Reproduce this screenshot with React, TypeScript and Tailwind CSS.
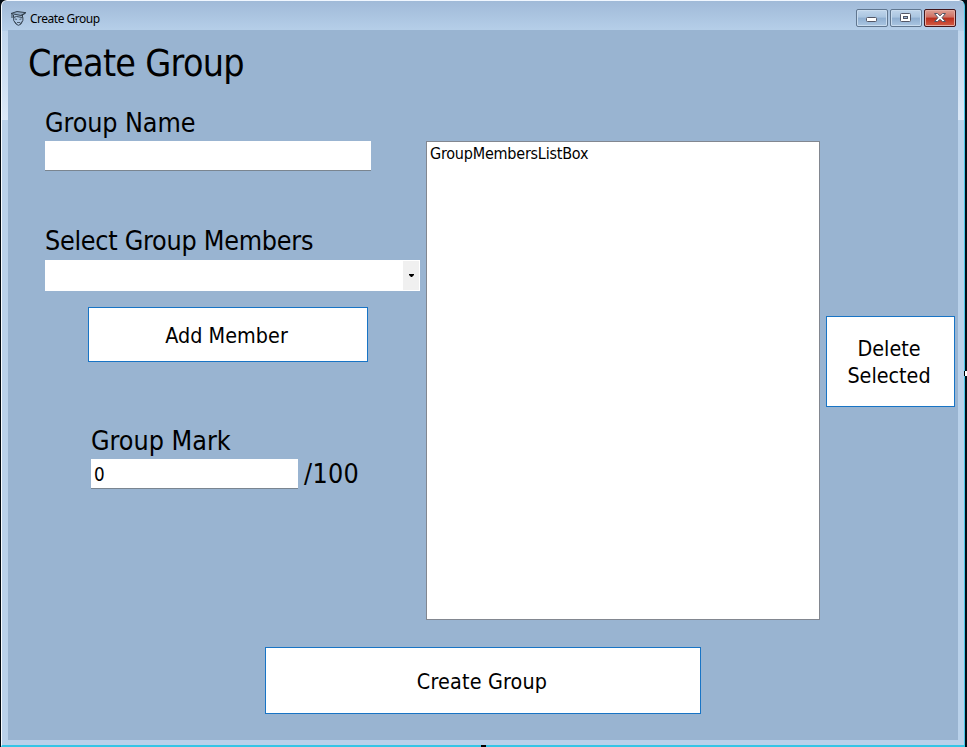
import type { ReactNode } from "react";

function WindowButton({ close = false, children }: { close?: boolean; children: ReactNode }) {
  const tone = close
    ? "border-[#42161b] bg-[linear-gradient(#dda094_0%,#cf6f62_45%,#b92d1c_50%,#d45c43_100%)] shadow-[inset_0_0_0_1px_#e5aaa0]"
    : "border-[#60768f] bg-[linear-gradient(#c0d5eb_0%,#aac5e0_45%,#8faed0_50%,#abc6e2_100%)] shadow-[inset_0_0_0_1px_#c9dcef]";
  return (
    <button className={"flex h-[18px] w-8 items-center justify-center rounded-[2px] border " + tone}>
      {children}
    </button>
  );
}

function TitleBar() {
  return (
    <header className="flex h-[30px] shrink-0 items-start bg-[linear-gradient(#a0bad8,#b6cfe9)] pl-2 pr-2">
      <svg className="mt-[9px] mr-[3px] h-[17px] w-[17px] shrink-0" viewBox="0 0 17 17" fill="none" stroke="#33414f">
        <path d="M1 3.5 7 1.5l9 1.2-5 2.8z" fill="#8fa8c2" strokeWidth="1" />
        <path d="M2 4v4M3.5 5v2.5l3-1 6 1V5M11 5.5l4-2M3.7 7.5v3l2.6 3.8 2.2 1 2.4-1.2 2-3.8v-3" strokeWidth="1" />
        <path d="m5 9 2 .4M9.5 9.4l2-.5M7 12.5h3M4.5 11.5l2 2.5M12 11.5l-2 2.5" strokeWidth=".8" />
      </svg>
      <span className="mt-[9px] font-['Noto_Sans',sans-serif] text-[12px] leading-[17px] tracking-[-0.5px]">Create Group</span>
      <div className="ml-auto mt-2 flex gap-[2px]">
        <WindowButton>
          <svg width="14" height="10"><rect x="1.5" y="4.5" width="10" height="4" rx="1" fill="#fff" stroke="#535666" /></svg>
        </WindowButton>
        <WindowButton>
          <svg width="14" height="10" stroke="#535666"><rect x="1.5" y=".5" width="10" height="8" rx="1" fill="#fff" /><rect x="4.5" y="3.5" width="4" height="2" fill="#9db9d7" /></svg>
        </WindowButton>
        <WindowButton close>
          <svg width="14" height="10"><path d="M1.5.5h3L7 2.8 9.5.5h3L9 4.7l3.5 3.8h-3L7 6.4 4.5 8.5h-3L5 4.7z" fill="#fff" stroke="#535666" /></svg>
        </WindowButton>
      </div>
    </header>
  );
}

function FormButton({ className, children }: { className: string; children: ReactNode }) {
  return (
    <button className={"border border-[#1874c5] bg-white pt-px text-[21.33px] leading-[27px] " + className}>{children}</button>
  );
}

export default function App() {
  return (
    <div className="relative flex h-[747px] w-[967px] flex-col overflow-hidden bg-[#020b14] pl-px pr-[2px] font-['DejaVu_Sans_Condensed','DejaVu_Sans',sans-serif] text-black [font-stretch:condensed]">
      <div className="flex min-h-0 flex-1 flex-col overflow-hidden rounded-t-[6px] border-t border-r border-b-2 border-l border-t-[#f0f7ff] border-r-[#48c6e6] border-b-[#35c5e6] border-l-[#f7fbff] bg-[linear-gradient(#b6cfe9_0,#dce9f8_119px,#b9d1ea_119px,#b9d1ea_100%)]">
        <TitleBar />
        <main className="mx-[6px] -mt-px mb-[5px] flex h-[710px] shrink-0 flex-col bg-[#99b4d1]">
          <h1 className="ml-5 mt-[10px] h-[46px] text-[37.33px] leading-[46px] tracking-[-0.7px] whitespace-nowrap">Create Group</h1>
          <div className="mt-[20px] flex h-[514px]">
            <section className="ml-[37px] w-[381px] text-[26.67px] leading-[34px] whitespace-nowrap">
              <label className="block h-[35px] tracking-[-0.1px]">Group Name</label>
              <div className="h-[30px] w-[326px] border-b border-[#7a8590] bg-white" />
              <label className="mt-[53px] block h-9 tracking-[-0.26px]">Select Group Members</label>
              <div className="flex h-[31px] w-[375px] justify-end border border-white bg-white">
                <div className="flex w-4 items-center justify-center bg-[#f0f0f0]">
                  <svg width="5" height="3"><path d="M0 0h5v1L3 3H2L0 1z" /></svg>
                </div>
              </div>
              <FormButton className="ml-[43px] mt-4 block h-[55px] w-[280px] pr-[3px] tracking-[0.05px]">Add Member</FormButton>
              <label className="ml-[46px] mt-[62px] block h-[35px]">Group Mark</label>
              <div className="ml-[46px] flex">
                <div className="h-[30px] w-[207px] border-b border-[#7a8590] bg-white pl-[3px] text-[18.67px] leading-[32px]">0</div>
                <span className="ml-[6px] leading-[30px] tracking-[0.3px]">/100</span>
              </div>
            </section>
            <div className="mt-[35px] h-[479px] w-[394px] border border-[#828790] bg-white pl-[3px] text-base leading-[24px] tracking-[-0.22px]">GroupMembersListBox</div>
            <FormButton className="ml-[6px] mt-[210px] h-[91px] w-[129px] pr-[3px]">Delete<br />Selected</FormButton>
          </div>
          <FormButton className="ml-[257px] mt-[27px] h-[67px] w-[436px] shrink-0 pr-[2px] tracking-[0.18px]">Create Group</FormButton>
        </main>
      </div>
      <div className="absolute left-[481px] top-[745px] h-[2px] w-[5px] bg-black" />
      <div className="absolute left-[964px] top-[371px] h-[5px] w-[3px] border-l border-black bg-white" />
    </div>
  );
}
